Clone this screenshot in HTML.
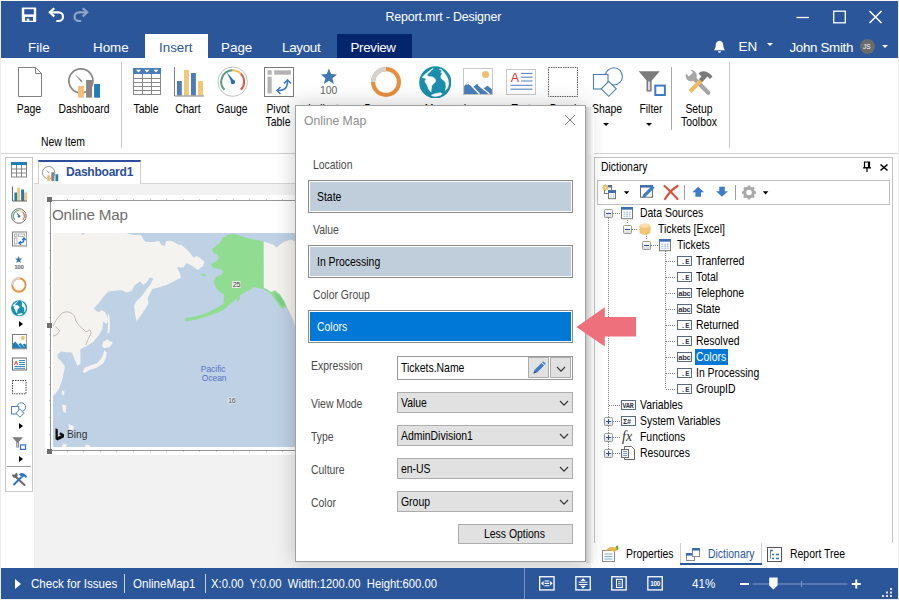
<!DOCTYPE html>
<html><head><meta charset="utf-8"><title>Report.mrt - Designer</title>
<style>
*{box-sizing:border-box;margin:0;padding:0}
html,body{width:899px;height:600px;overflow:hidden;background:#fff}
body{font-family:"Liberation Sans",sans-serif;font-size:12.4px;color:#000;position:relative}
svg{position:absolute;overflow:visible}
.t{position:absolute;white-space:nowrap;line-height:14px}
.ms{position:absolute;white-space:nowrap;font-size:12.4px;line-height:14px;transform:scaleX(.842);transform-origin:0 0}
.w{color:#fff}
.box{position:absolute}
#app{position:absolute;left:0;top:0;width:899px;height:600px;overflow:hidden;background:#fff}
#hdr{position:absolute;left:1px;top:0;width:897px;height:58px;background:#2b579a}
.tab{position:absolute;top:40px;font-size:13.4px;line-height:16px;color:#fff;white-space:nowrap}
#ribbon{position:absolute;left:1px;top:58px;width:897px;height:96px;background:#fff;border-bottom:1px solid #d2d2d2}
.rl{position:absolute;font-size:12.4px;line-height:13px;text-align:center;white-space:nowrap;transform:translateX(-50%) scaleX(.84);top:45px}
.vsep{position:absolute;width:1px;background:#c8c8c8}
.dd{position:absolute;width:0;height:0;border-left:3px solid transparent;border-right:3px solid transparent;border-top:3px solid #000}
#status{position:absolute;left:1px;top:568px;width:897px;height:31px;background:#2b579a}
.st{position:absolute;top:9px;font-size:12.6px;line-height:15px;color:#fff;white-space:nowrap;transform:scaleX(.92);transform-origin:0 0}
</style></head><body>
<svg width="0" height="0" style="position:absolute"><defs>
<symbol id="i-page" viewBox="0 0 32 32"><path d="M4.5 1.5H21.5L27.5 7.5V30.5H4.5Z" fill="#fff" stroke="#808080"/><path d="M21.5 1.5V7.5H27.5" fill="none" stroke="#808080"/></symbol>
<symbol id="i-dash" viewBox="0 0 32 32"><circle cx="12.9" cy="14.8" r="12" fill="#fff" stroke="#868686" stroke-width="1.7"/><path d="M6.3 7.6L13.6 14.2L14.8 16.6L12.6 15.4Z" fill="#868686"/><rect x="10.1" y="20" width="5.8" height="11.7" fill="#f5be78"/><rect x="18.1" y="14" width="6" height="17.7" fill="#8a8580"/><rect x="26.1" y="18" width="5.9" height="13.7" fill="#1f7eb8"/></symbol>
<symbol id="i-table" viewBox="0 0 32 32"><rect x="2.5" y="2.5" width="27" height="26" fill="#fff" stroke="#8a8a8a"/><rect x="2" y="2" width="28" height="6" fill="#4a7ebb"/><path d="M2.5 12.5H29.5M2.5 16.5H29.5M2.5 20.5H29.5M2.5 24.5H29.5M11.5 8V28M20.5 8V28" stroke="#8a8a8a" fill="none"/><path d="M5 3.8h5l-2.5 2.8zM13.5 3.8h5l-2.5 2.8zM22.5 3.8h5l-2.5 2.8z" fill="#fff"/></symbol>
<symbol id="i-chart" viewBox="0 0 32 32"><rect x="5" y="15" width="4.8" height="14.5" fill="#4a7ebb"/><rect x="12" y="4" width="4.9" height="25.5" fill="#f0c878"/><rect x="19" y="7" width="4.9" height="22.5" fill="#4a7ebb"/><rect x="26" y="15" width="5" height="14.5" fill="#f0c878"/><path d="M2.5 1V30H32" fill="none" stroke="#808080"/></symbol>
<symbol id="i-gauge" viewBox="0 0 32 32"><circle cx="15.7" cy="15.7" r="14.7" fill="#fff" stroke="#c4c4c4"/><path d="M7.6 23.8A11.5 11.5 0 0 1 15.7 4.2" fill="none" stroke="#5a9f80" stroke-width="2"/><path d="M15.7 4.2A11.5 11.5 0 0 1 23.8 7.6" fill="none" stroke="#f0c060" stroke-width="2"/><path d="M23.8 7.6A11.5 11.5 0 0 1 23.8 23.8" fill="none" stroke="#d85a40" stroke-width="2"/><path d="M9.8 6L17.3 15L14.6 16.8Z" fill="#2e6db4"/><circle cx="15.9" cy="16" r="2.2" fill="#2e6db4"/></symbol>
<symbol id="i-pivot" viewBox="0 0 32 32"><rect x="1.5" y="1.5" width="29" height="29" fill="#fff" stroke="#7a7a7a"/><rect x="4.5" y="4.3" width="4.2" height="4.4" fill="#b4b4b4"/><rect x="11.2" y="4.3" width="16.7" height="4.4" fill="#b4b4b4"/><rect x="4.5" y="10.7" width="4.2" height="16.7" fill="#b4b4b4"/><path d="M14.5 24.5C22 24.5 24.5 22 24.5 14.5" fill="none" stroke="#3d7cc9" stroke-width="1.6"/><path d="M17.5 21L14 24.5L17.5 28M21 17.5L24.5 14L28 17.5" fill="none" stroke="#3d7cc9" stroke-width="1.6"/></symbol>
<symbol id="i-ind" viewBox="0 0 32 32"><path d="M15.9 3.5L18.1 9.1L24 9.4L19.4 13.2L20.9 18.9L15.9 15.7L10.9 18.9L12.4 13.2L7.8 9.4L13.7 9.1Z" fill="#3f78b8"/><text x="15.6" y="28.6" font-size="10.400" text-anchor="middle" fill="#666" font-family="Liberation Sans,sans-serif">100</text></symbol>
<symbol id="i-prog" viewBox="0 0 32 32"><circle cx="16" cy="16" r="12.9" fill="none" stroke="#e8903f" stroke-width="4.2"/><path d="M3.1 16A12.9 12.9 0 0 1 16 3.1" fill="none" stroke="#d2d2d2" stroke-width="4.2"/></symbol>
<symbol id="i-map" viewBox="0 0 32 32"><circle cx="16.300" cy="16.400" r="16.100" fill="#1a8fad"/><path d="M13.700 2.400L9.300 5.700L5.300 9.100L3.300 11.400L6.700 12.400L7 13.400L6 14.700L6.300 16.400L8 18.400L9.300 22.400L11 25.100L12 26.100L12.300 23.100L12.700 19.700L14.300 17.700L16 16.400L16.700 14.400L15.700 12.400L13.700 11.100L10.300 10.400L8 10.100L8.300 8.400L10.300 6.400L12.700 4.100L14 2.700Z" fill="#fff" stroke="#fff" stroke-width="0.600" stroke-linejoin="round"/><path d="M20.300 3.700L22 3.400L22.700 5.100L21.700 6.400L23.300 7.100L22.300 9.100L21.700 10.700L22.700 13.100L25.300 14.700L26.700 17.100L27 21.100L26.300 24.400L28.700 21.700L29.700 17.700L29 13.100L26.700 8.400L24 5.100L21.700 3.100Z" fill="#fff" stroke="#fff" stroke-width="0.500" stroke-linejoin="round"/><path d="M12.300 29.100L16 27.700L21.300 26.700L23.300 27.700L21.300 29.400L16.700 30.400L13.300 30.100Z" fill="#fff" stroke="#fff" stroke-width="0.500" stroke-linejoin="round"/></symbol>
<symbol id="i-img" viewBox="0 0 32 32"><rect x="1.500" y="2.500" width="29" height="26" fill="#fff" stroke="#c8c8c8"/><circle cx="23.500" cy="8.600" r="3.500" fill="#f0c070"/><path d="M2.100 28V20.300L6 15.800L10.700 21.300L15.200 17.700L20.400 23.200L25.500 19.700L29.900 23.200V28Z" fill="#4a7ebb"/><path d="M6 15.800L4 18.200L5.200 19L6.200 17.800L7.400 19.200L8.300 18.500Z" fill="#fff"/><path d="M7 17L17.500 28M16 18.500L27.500 28" stroke="#fff" stroke-width="1.300" fill="none"/></symbol>
<symbol id="i-text" viewBox="0 0 32 32"><rect x="1.500" y="3.500" width="29" height="25" fill="#fff" stroke="#c8c8c8"/><text x="5.800" y="16" font-size="12.500" fill="#e03030" font-family="Liberation Sans,sans-serif">A</text><path d="M16 7.400H27.500M16 11.200H27.500M16 15H27.500M5.500 19.300H27.500M5.500 23.200H27.500" stroke="#4a7ebb" stroke-width="1" fill="none"/></symbol>
<symbol id="i-panel" viewBox="0 0 32 32"><rect x="1.500" y="1.500" width="29" height="29" fill="#fff" stroke="#505050" stroke-dasharray="1.400 1"/></symbol>
<symbol id="i-shape" viewBox="0 0 32 32"><circle cx="22.800" cy="10.400" r="8.600" fill="#fff" stroke="#4a7ebb" stroke-width="1.100"/><rect x="2.500" y="8.500" width="14.500" height="14.500" fill="#fff" stroke="#4a7ebb" stroke-width="1.100"/><path d="M17.700 15.300L25.200 22.800L17.700 30.300L10.200 22.800Z" fill="#fff" stroke="#4a7ebb" stroke-width="1.100"/></symbol>
<symbol id="i-filter" viewBox="0 0 32 32"><path d="M2.700 5.200H23.800L15.700 14.500V25.500H10.500V14.500Z" fill="#7c7c7c"/><path d="M12 15.500H14.200V24H12Z" fill="#d8d8d8"/><rect x="19.300" y="19.600" width="9.600" height="9.400" fill="#fff" stroke="#3d7cc9" stroke-width="2"/></symbol>
<symbol id="i-tools" viewBox="0 0 32 32"><path d="M9 10.500L25.300 26.800" stroke="#a6a6a6" stroke-width="4.400" stroke-linecap="round" fill="none"/><circle cx="8.200" cy="9.700" r="5.600" fill="#a6a6a6"/><path d="M0.500 5L4.500 1L10 6.500L6 10.500Z" fill="#fff"/><path d="M19.500 13L7 25.500" stroke="#f0b860" stroke-width="4.200" fill="none"/><path d="M21 11L17.500 14.500" stroke="#7a7a7a" stroke-width="4.200" fill="none"/><path d="M15.500 7.500C19 4 24 4.500 29.500 10.500L27 13L24.500 10.500L21.500 13.500L17.500 9.500Z" fill="#7a7a7a"/></symbol>
<symbol id="s-table" viewBox="0 0 16 16"><rect x="0.500" y="0.500" width="15" height="14.500" fill="#fff" stroke="#858585"/><rect x="0" y="0" width="16" height="3" fill="#1f7eb8"/><path d="M0.500 7H15.500M0.500 11H15.500M5.500 3V15M10.500 3V15" stroke="#858585" fill="none"/></symbol>
<symbol id="s-chart" viewBox="0 0 16 16"><rect x="3.400" y="6.500" width="2.800" height="8.500" fill="#1f7eb8"/><rect x="6.200" y="1.700" width="2.800" height="13.300" fill="#f5c878"/><rect x="10.100" y="3.500" width="2.900" height="11.500" fill="#1f7eb8"/><rect x="13" y="6.500" width="3" height="8.500" fill="#f5c878"/><path d="M1.500 0.500V15H16.300" fill="none" stroke="#666"/></symbol>
<symbol id="s-gauge" viewBox="0 0 16 16"><circle cx="7.900" cy="8" r="7.300" fill="#fff" stroke="#6e6e6e" stroke-width="1"/><path d="M4 11.900A5.500 5.500 0 0 1 7.900 2.500" fill="none" stroke="#5a9f80" stroke-width="1.100"/><path d="M7.900 2.500A5.500 5.500 0 0 1 11.800 4.100" fill="none" stroke="#f0c060" stroke-width="1.100"/><path d="M11.800 4.100A5.500 5.500 0 0 1 11.800 11.900" fill="none" stroke="#e0593c" stroke-width="1.100"/><path d="M5 3.500L8.700 7.700L7.400 8.600Z" fill="#2e6db4"/><circle cx="8" cy="8.200" r="1.200" fill="#2e6db4"/></symbol>
<symbol id="s-pivot" viewBox="0 0 16 16"><rect x="1.500" y="1" width="14.300" height="14" fill="#fff" stroke="#7a7a7a"/><rect x="3.500" y="3" width="2.500" height="2.500" fill="#fff" stroke="#999" stroke-width="0.700"/><rect x="7.500" y="3" width="6" height="2.500" fill="#fff" stroke="#999" stroke-width="0.700"/><rect x="3.500" y="7" width="2.500" height="6" fill="#fff" stroke="#999" stroke-width="0.700"/><path d="M8.500 12C12 12 13 11 13 7.500" fill="none" stroke="#1f6fc0" stroke-width="1.400"/><path d="M10 10.300L8 12L10 13.700M11.300 9L13 7L14.700 9" fill="none" stroke="#1f6fc0" stroke-width="1.300"/></symbol>
<symbol id="s-ind" viewBox="0 0 16 16"><path d="M7.600 0L8.600 2.500L11.200 2.600L9.200 4.300L9.900 6.900L7.600 5.400L5.300 6.900L6 4.300L4 2.600L6.600 2.500Z" fill="#3f78b8"/><text x="8" y="13" font-size="6.200" font-weight="bold" text-anchor="middle" fill="#666" font-family="Liberation Sans,sans-serif" letter-spacing="-0.200">100</text></symbol>
<symbol id="s-prog" viewBox="0 0 16 16"><circle cx="7.900" cy="8" r="6.700" fill="none" stroke="#e8903f" stroke-width="1.900"/><path d="M1.200 8A6.700 6.700 0 0 1 9 1.400" fill="none" stroke="#d6d6d6" stroke-width="1.900"/></symbol>
<symbol id="s-img" viewBox="0 0 16 16"><rect x="1.500" y="0.500" width="14.300" height="14.300" fill="#fff" stroke="#7a7a7a"/><circle cx="11.900" cy="4" r="2" fill="#f5c070"/><path d="M2 14.300V9.500L4.500 7.500L7.500 10.500L9.500 8.800L11.500 10.800L13.500 9.500L15.300 11V14.300Z" fill="#1f7eb8"/><path d="M4.500 7.500L10 13.500M9.500 8.800L13.500 13" stroke="#fff" stroke-width="0.700" fill="none"/></symbol>
<symbol id="s-text" viewBox="0 0 16 16"><rect x="1.500" y="2" width="14.300" height="12" fill="#fff" stroke="#6a6a6a"/><text x="3" y="8.500" font-size="6" font-weight="bold" fill="#e03030" font-family="Liberation Sans,sans-serif">A</text><path d="M8 4.500H14M8 6.500H14M8 8.500H14M3.500 10.500H14M3.500 12.300H14" stroke="#1f7eb8" stroke-width="0.900" fill="none"/></symbol>
<symbol id="s-panel" viewBox="0 0 16 16"><rect x="1.500" y="1.500" width="13.500" height="13.300" fill="#fff" stroke="#444" stroke-dasharray="1.500 1"/></symbol>
<symbol id="s-shape" viewBox="0 0 16 16"><circle cx="10.300" cy="5.100" r="4.300" fill="#fff" stroke="#4a7ebb" stroke-width="1"/><rect x="0.500" y="4.500" width="7.300" height="7.500" fill="#fff" stroke="#4a7ebb" stroke-width="1"/><path d="M9 7.200L13 11.200L9 15.200L5 11.200Z" fill="#fff" stroke="#4a7ebb" stroke-width="1"/></symbol>
<symbol id="s-filter" viewBox="0 0 16 16"><path d="M1.300 2.200H11.900L7.900 6.800V12.600H5.300V6.800Z" fill="#7c7c7c"/><path d="M6.100 7.500H7.100V11.800H6.100Z" fill="#d8d8d8"/><rect x="9.500" y="9.900" width="5" height="4.500" fill="#fff" stroke="#2e75c8" stroke-width="1.200"/></symbol>
<symbol id="s-tools" viewBox="0 0 16 16"><path d="M4.500 5.500L13.500 14" stroke="#6a6a6a" stroke-width="2" stroke-linecap="round" fill="none"/><path d="M1.200 3.200A3 3 0 0 0 5.500 6.500A3 3 0 0 0 5.200 1.500L3.700 3.800L2.300 3.500Z" fill="#6a6a6a"/><path d="M10.500 6L2.500 14" stroke="#2e75c8" stroke-width="2" fill="none"/><path d="M7.500 3.500C10 1 13 1.500 16.300 5.500L14.800 7L13 5.200L11.500 6.700L9 4.200Z" fill="#2e75c8"/></symbol>
</defs></svg>
<div id="app">
<!-- HEADER -->
<div id="hdr">
  <svg style="left:21px;top:7px" width="70" height="17" viewBox="0 0 70 17">
    <rect x="-0.200" y="0.500" width="14.400" height="14.400" rx="0.600" fill="#fff"/><rect x="2.250" y="2.200" width="9.550" height="5.200" fill="#2b579a"/><rect x="3.100" y="9.900" width="7.900" height="3.800" fill="#2b579a"/><rect x="4.750" y="11.600" width="2.500" height="2.100" fill="#fff"/>
    <path d="M28 5.300H36.650A4.350 4.350 0 0 1 36.650 14H34.300" fill="none" stroke="#fff" stroke-width="2.200"/><path d="M32.300 1.200L27.800 5.300L32.300 9.500" fill="none" stroke="#fff" stroke-width="2.200"/>
    <path d="M65 5.300H56.900A4.350 4.350 0 0 0 56.900 14H59.200" fill="none" stroke="#8fa5cc" stroke-width="2.200"/><path d="M60.700 1.200L65.200 5.300L60.700 9.500" fill="none" stroke="#8fa5cc" stroke-width="2.200"/>
  </svg>
  <div class="t w" style="left:384.500px;top:9px;font-size:12.400px;line-height:16px;letter-spacing:-0.160px">Report.mrt - Designer</div>
  <svg style="left:795px;top:10px" width="90" height="15" viewBox="0 0 90 15"><path d="M0.500 7.500H13" stroke="#fff" stroke-width="1.300"/><rect x="37.700" y="1.200" width="11.600" height="11.600" fill="none" stroke="#fff" stroke-width="1.300"/><path d="M73.500 1L85.500 13M85.500 1L73.500 13" stroke="#fff" stroke-width="1.500"/></svg>
  <div class="box" style="left:144px;top:34px;width:63px;height:24px;background:#fff"></div>
  <div class="box" style="left:336px;top:34px;width:75px;height:24px;background:#03256c"></div>
  <div class="tab" style="left:27px">File</div>
  <div class="tab" style="left:92px">Home</div>
  <div class="tab" style="left:158px;color:#2b579a">Insert</div>
  <div class="tab" style="left:220px">Page</div>
  <div class="tab" style="left:281px;letter-spacing:-0.300px">Layout</div>
  <div class="tab" style="left:349.500px;letter-spacing:-0.350px">Preview</div>
  <svg style="left:712px;top:40px" width="13" height="14" viewBox="0 0 13 14"><path d="M6.500 0.800C9 0.800 10.300 3 10.300 5.500C10.300 8 11.200 9 12 10.200H1C1.800 9 2.700 8 2.700 5.500C2.700 3 4 0.800 6.500 0.800Z" fill="#fff"/><path d="M5 11.300H8A1.500 1.500 0 0 1 5 11.300Z" fill="#fff"/></svg>
  <div class="tab" style="left:737.500px;top:38.500px">EN</div>
  <div class="dd" style="left:766px;top:43px;border-top-color:#fff"></div>
  <div class="tab" style="left:788.500px;letter-spacing:-0.350px">John Smith</div>
  <div class="box" style="left:859px;top:39px;width:15px;height:15px;border-radius:8px;background:#6b6b6b"></div>
  <div class="t w" style="left:862px;top:42px;font-size:6.500px;line-height:9px;letter-spacing:0">JS</div>
  <div class="dd" style="left:881px;top:45px;border-top-color:#fff"></div>
</div>
<!-- RIBBON -->
<div id="ribbon">
  <div class="vsep" style="left:120px;top:4px;height:86px"></div>
  <div class="vsep" style="left:728px;top:4px;height:86px"></div>
  <div class="vsep" style="left:670px;top:9px;height:63px;background:#a8a8a8"></div>
  <svg style="left:13px;top:8px" width="32" height="32"><use href="#i-page"/></svg>
  <svg style="left:67px;top:8px" width="32" height="32"><use href="#i-dash"/></svg>
  <svg style="left:130px;top:8px" width="32" height="32"><use href="#i-table"/></svg>
  <svg style="left:171px;top:8px" width="32" height="32"><use href="#i-chart"/></svg>
  <svg style="left:216px;top:8px" width="32" height="32"><use href="#i-gauge"/></svg>
  <svg style="left:262px;top:8px" width="32" height="32"><use href="#i-pivot"/></svg>
  <svg style="left:312px;top:7.300px" width="32" height="32"><use href="#i-ind"/></svg>
  <svg style="left:369px;top:8px" width="32" height="32"><use href="#i-prog"/></svg>
  <svg style="left:418px;top:7.600px" width="32" height="32"><use href="#i-map"/></svg>
  <svg style="left:461px;top:8px" width="32" height="32"><use href="#i-img"/></svg>
  <svg style="left:504px;top:8px" width="32" height="32"><use href="#i-text"/></svg>
  <svg style="left:546px;top:8px" width="32" height="32"><use href="#i-panel"/></svg>
  <svg style="left:590px;top:8px" width="32" height="32"><use href="#i-shape"/></svg>
  <svg style="left:635px;top:8px" width="32" height="32"><use href="#i-filter"/></svg>
  <svg style="left:682px;top:8px" width="32" height="32"><use href="#i-tools"/></svg>
  <div class="rl" style="left:28px">Page</div>
  <div class="rl" style="left:82.500px">Dashboard</div>
  <div class="rl" style="left:62px;top:78px">New Item</div>
  <div class="rl" style="left:145px">Table</div>
  <div class="rl" style="left:187px">Chart</div>
  <div class="rl" style="left:231px">Gauge</div>
  <div class="rl" style="left:277px">Pivot<br>Table</div>
  <div class="rl" style="left:327px">Indicator</div>
  <div class="rl" style="left:384px">Progress</div>
  <div class="rl" style="left:434px">Map</div>
  <div class="rl" style="left:477px">Image</div>
  <div class="rl" style="left:520px">Text</div>
  <div class="rl" style="left:562px">Panel</div>
  <div class="rl" style="left:606px">Shape</div>
  <div class="rl" style="left:650px">Filter</div>
  <div class="rl" style="left:698px">Setup<br>Toolbox</div>
  <div class="dd" style="left:601.500px;top:65px"></div>
  <div class="dd" style="left:645.300px;top:65px"></div>
</div>
<!-- WORKSPACE -->
<div class="box" style="left:5px;top:157px;width:28px;height:335px;background:#fff;border:1px solid #c8c8c8"></div>
<div id="tb">
  <svg style="left:11px;top:162px" width="16" height="16"><use href="#s-table"/></svg>
  <svg style="left:11px;top:185.500px" width="16" height="16"><use href="#s-chart"/></svg>
  <svg style="left:11px;top:207.500px" width="16" height="16"><use href="#s-gauge"/></svg>
  <svg style="left:11px;top:230.500px" width="16" height="16"><use href="#s-pivot"/></svg>
  <svg style="left:11px;top:256px" width="16" height="16"><use href="#s-ind"/></svg>
  <svg style="left:11px;top:277px" width="16" height="16"><use href="#s-prog"/></svg>
  <svg style="left:11px;top:300px" width="16" height="16"><use href="#i-map"/></svg>
  <svg style="left:11px;top:334px" width="16" height="16"><use href="#s-img"/></svg>
  <svg style="left:11px;top:355.500px" width="16" height="16"><use href="#s-text"/></svg>
  <svg style="left:11px;top:379px" width="16" height="16"><use href="#s-panel"/></svg>
  <svg style="left:11px;top:402px" width="16" height="16"><use href="#s-shape"/></svg>
  <svg style="left:11px;top:435px" width="16" height="16"><use href="#s-filter"/></svg>
  <svg style="left:11px;top:470.500px" width="16" height="16"><use href="#s-tools"/></svg>
  <div class="box" style="left:18.500px;top:320.500px;width:0;height:0;border-top:3px solid transparent;border-bottom:3px solid transparent;border-left:4px solid #000"></div>
  <div class="box" style="left:18.500px;top:422.500px;width:0;height:0;border-top:3px solid transparent;border-bottom:3px solid transparent;border-left:4px solid #000"></div>
  <div class="box" style="left:18.500px;top:455.500px;width:0;height:0;border-top:3px solid transparent;border-bottom:3px solid transparent;border-left:4px solid #000"></div>
  <div class="box" style="left:7px;top:466px;width:24px;height:1px;background:#a0a0a0"></div>
</div>
<!-- design surface -->
<div class="box" style="left:34px;top:183px;width:557px;height:385px;background:#f2f2f2;border-top:1px solid #d6d6d6;border-left:1px solid #ececec"></div>
<div class="box" style="left:38px;top:160px;width:103px;height:24px;background:#fff;border:1px solid #d0d0d0;border-top:2px solid #2b4f9a;border-bottom:none"></div>
<svg style="left:42px;top:164.500px" width="16.500" height="16.500" viewBox="0 0 32 32"><use href="#i-dash" width="32" height="32"/></svg>
<div class="t" style="left:65.500px;top:164px;font-size:13px;line-height:15px;font-weight:bold;color:#2b4f9a;letter-spacing:-0.300px;transform:scaleX(.93);transform-origin:0 0">Dashboard1</div>
<!-- page -->
<div class="box" style="left:45px;top:195px;width:540px;height:260px;background:#fff"></div>
<div class="box" style="left:50px;top:200px;width:535px;height:251px;border:1px solid #969696;border-right:none"></div>
<div class="t" style="left:52px;top:205px;font-size:15.200px;line-height:19px;color:#707070;letter-spacing:-0.200px">Online Map</div>
<svg style="left:53px;top:233px" width="244" height="214" viewBox="53 233 244 214">
  <rect x="53" y="233" width="244" height="214" fill="#bfd1e5"/>
  <g fill="#f5f3f0">
  <!-- main asia -->
  <path d="M53 233H81.500L83 235L85 233H126L133.500 235H141L143.500 239.500L146 242H153.500L159 241L161.500 245L165 246L166 241H171.500L181.500 246L188.500 251.500L193.500 257.500L197 256L201 259L204.500 262L203 266L198 270L196.500 268.500L193.500 264L188.500 261L185 263.500L183.500 266L177 267.500L180 273.500L181 277.500L173.500 281.500L166.500 285L158.500 287.500L152.500 289L150 293.500L147.500 298.500L148.500 303.500L145 309.500L141 315L136.500 321L135 313.500L134 306L136.500 301L141.500 296.500L146 290L150 285L153.500 278.500L150 277.500L146.500 282.500L143.500 285L140 281.500L135 285L131.500 291L126.500 292.500L121.500 290L108.500 291.500L103.500 296.500L98.500 303.500L93.500 308.500L98.500 312.500L101.500 310L105 312L107 316L108 320L106.500 324L103.100 321.500L102.500 328.700L98.800 335.200L93.400 341.700L86.900 346L80.300 349.300L80.500 355L80.500 364L77.500 365.800L75 360.500L73 355L71.500 352.500L66 352.200L61 351.500L57.500 354.500L57.800 358L61.500 361.500L65 366.600L63.400 374.200L61.900 380.700L58.700 389.400L54.300 394.800L53 396Z"/>
  <!-- sakhalin, japan -->
  <path d="M107.800 313L109.500 316L110 326L109.300 333.500L107.600 333L108 324Z"/>
  <path d="M103.100 341.700L107.400 339.500L112.900 342.800L109.600 347.100L104.200 348.200L102 346Z"/>
  <path d="M104.200 350.300L106.800 352.500L105.900 357.900L103.100 363.400L96.600 367.700L89 370.300L84.700 373.100L82.500 372L84.700 367.700L90.100 365.500L96.600 363.400L101 359L103.100 354.700Z"/>
  <path d="M62 390.500L64.700 391.500L63.400 396L61.800 394Z"/><path d="M62 404.500L66.300 405.600L65.600 413.200L63 411Z"/><path d="M68.400 424L73.800 426.200L72.800 432.700L69.500 430.600Z"/><path d="M63 443.500L67 444.500L66 447L62 447Z"/><path d="M85.800 444.600L90 445.500L90 447L85 447Z"/>
  <!-- chukotka right bit -->
  <path d="M180 244L185 248L190 253L193.500 259.500L198.500 257L202.500 260.500L201.500 264L196.500 269L191.500 265.500L186.500 263L183.500 267L180 268Z"/>
  <!-- canada -->
  <path d="M263.500 241.500L273 244.500L276.500 247.500L283.500 242L291 239.500L296 242V330L293.500 321L289 311L286.500 306L284 301L280 294.500L275 290.500L271 292L266.500 289L263.500 288Z"/>
  </g>
  <path d="M115.500 302.500l2.500 -1.500l2.500 1.500l-2.500 2Z" fill="#bfd1e5"/>
  <path d="M53 326C56 320 60 313 65 312C71 311 75 315 76 321C78 326 82 327 85.800 332L90 329.800L91.200 333L88 339.500L85.800 345M53 336L56.500 335L59.800 331L55.400 326.500" fill="none" stroke="#b3aea8" stroke-width="0.800"/>
  <!-- alaska -->
  <path d="M231.500 234L237 234.500L243.500 237L253.500 239.500L263.500 241.500L263.700 288L266.500 289L271 292L275 290.500L280 294.500L284 301L286.500 306.500L282.500 309L278.500 304.500L275 299.500L271.500 294.500L268.500 292L264 289.500L258.500 288L253.500 287L251 289.500L246.500 291.500L241.500 294.500L237.500 298L233.500 301.500L228.500 305.500L226.500 308L220 311.500L210 315.500L196.500 319.500L186 321.500L184.500 318L195 316.500L206.500 313L216.500 308L223.500 304L224 294.500L220 292L216 288L213.500 281.500L216 277L221.500 274.500L223.500 271.500L220 269L213.500 268L210.500 264L216 261.500L219 258L217.500 254.500L213.500 253L212 249L216 246L220 243L222.500 238L227.500 235Z" fill="#90dd92"/>
  <path d="M201 273.500L206.500 274.500L205.500 276.500L201.500 275.500Z" fill="#90dd92"/><path d="M237.500 298L240.500 296L239 301L236.500 301.500Z" fill="#90dd92"/>
  <path d="M274 292L280 296L285 304L283 307L277 300Z" fill="#7fcf86"/>
  <rect x="232" y="281" width="8.500" height="7" fill="#e9e9e6"/>
  <text x="232.800" y="287" font-size="7" fill="#444" font-family="Liberation Sans,sans-serif" letter-spacing="-0.300">25</text>
  <text x="213.200" y="371.700" font-size="8.400" fill="#5474c4" text-anchor="middle" font-family="Liberation Sans,sans-serif">Pacific</text>
  <text x="214.200" y="380.700" font-size="8.400" fill="#5474c4" text-anchor="middle" font-family="Liberation Sans,sans-serif">Ocean</text>
  <rect x="227.700" y="397.300" width="7.800" height="6.400" fill="#dde3ea"/>
  <text x="228.300" y="403" font-size="6.800" fill="#555" font-family="Liberation Sans,sans-serif" letter-spacing="-0.300">16</text>
  <path d="M55.500 428.300L57.800 429.200V437L61 435.200L59.300 434.300L60.300 432.300L64 434.200V437.200L57.800 440.500L55.500 439.200Z" fill="#111"/>
  <text x="67" y="438.200" font-size="10.200" fill="#333" font-family="Liberation Sans,sans-serif">Bing</text>
</svg>
<div id="ticks" class="box" style="left:50px;top:199px;width:535px;height:1px;background:repeating-linear-gradient(90deg,#c4c4c4 0 1px,transparent 1px 16.600px)"></div>
<div class="box" style="left:50px;top:451px;width:535px;height:1px;background:repeating-linear-gradient(90deg,#c4c4c4 0 1px,transparent 1px 16.600px)"></div>
<div class="box" style="left:49px;top:200px;width:1px;height:251px;background:repeating-linear-gradient(180deg,#c4c4c4 0 1px,transparent 1px 16.700px)"></div>
<!-- handles -->
<div class="box" style="left:47px;top:197px;width:5px;height:5px;background:#6e6e6e"></div>
<div class="box" style="left:47px;top:322.500px;width:5px;height:5px;background:#6e6e6e"></div>
<div class="box" style="left:47px;top:449px;width:5px;height:5px;background:#6e6e6e"></div>
<!-- DICTIONARY -->
<div class="box" style="left:594px;top:157px;width:299px;height:386px;background:#fff;border:1px solid #c4c4c4;border-bottom:none"></div>
<div class="box" style="left:594px;top:543px;width:299px;height:25px;background:#fff"></div>
<div class="ms" style="left:601px;top:160px">Dictionary</div>
<svg style="left:862px;top:161px" width="28" height="12" viewBox="0 0 28 12"><path d="M2.500 1H7.500V6.500H2.500ZM6.500 1V6.500M1 6.800H9M5 7V11" fill="none" stroke="#000" stroke-width="1.200"/><path d="M18.500 3.500L25.500 9.500M25.500 3.500L18.500 9.500" stroke="#000" stroke-width="1.600"/></svg>
<div class="box" style="left:597px;top:180px;width:293px;height:25px;background:#fff;border:1px solid #c0c0c0"></div>
<svg style="left:600px;top:183px" width="172" height="19" viewBox="600 183 172 19">
<rect x="604.500" y="185.500" width="7" height="8" fill="#fff" stroke="#7a7a7a"/><rect x="604" y="185" width="8" height="2.500" fill="#3b6fb5"/>
<rect x="608.500" y="190.700" width="7" height="8" fill="#fff" stroke="#7a7a7a"/><rect x="608" y="190.200" width="8" height="2.800" fill="#3b6fb5"/><path d="M610.500 195h1M613 195h1M610.500 197h1M613 197h1" stroke="#7aa7d8"/>
<g stroke="#f0c470" stroke-width="1.100"><path d="M605.500 184V191.200M602 187.600H609M603 185.100L608 190.100M608 185.100L603 190.100"/></g><circle cx="605.500" cy="187.600" r="2.300" fill="none" stroke="#f0c470" stroke-width="1"/><circle cx="605.500" cy="187.600" r="0.800" fill="#fff"/>
<path d="M623.900 191.200h5.400l-2.700 3.100Z" fill="#000"/>
<rect x="640.500" y="185.700" width="12" height="11.500" fill="#fff" stroke="#6a6a6a"/><rect x="640" y="185.200" width="13" height="2.400" fill="#3b6fb5"/><path d="M642 198L643.200 194.500L652.300 185.600L654.600 187.800L645.500 196.800Z" fill="#3d7cc9"/>
<path d="M664.500 186C668 189 673 194 677.500 199M677.500 186C672 189.500 668 194 665 199" fill="none" stroke="#d9533c" stroke-width="2.200" stroke-linecap="round"/>
<path d="M684.500 185V200M735.500 185V200" stroke="#a0a0a0"/>
<path d="M698.200 186.700L704.100 192.300H701V196.700H695.400V192.300H692.300Z" fill="#3b7ccb"/>
<path d="M722 196.800L727.900 191.200H724.800V186.700H719.200V191.200H716.100Z" fill="#3b7ccb"/>
<g transform="translate(749 192.500)"><circle r="4.600" fill="none" stroke="#a8a8a8" stroke-width="2.600"/><path d="M0 -7V7M-7 0H7M-5 -5L5 5M5 -5L-5 5" stroke="#a8a8a8" stroke-width="2.400"/><circle r="2.800" fill="#fff"/></g>
<path d="M762.800 191.300h5.600l-2.800 3.200Z" fill="#000"/>
</svg>
<svg style="left:594px;top:205px" width="299" height="260" viewBox="594 205 299 260"><defs><linearGradient id="exg" x1="0" y1="0" x2="0" y2="1"><stop offset="0" stop-color="#fff"/><stop offset="1" stop-color="#dcdcdc"/></linearGradient></defs>
<path d="M608.500 218V453" stroke="#808080" stroke-width="1" stroke-dasharray="1 1" fill="none"/>
<path d="M627.500 218V224M646.500 234V240M665.500 251V389" stroke="#808080" stroke-width="1" stroke-dasharray="1 1" fill="none"/>
<path d="M613 213.5H620" stroke="#808080" stroke-width="1" stroke-dasharray="1 1" fill="none"/>
<rect x="604.5" y="209.5" width="8" height="8" rx="1" fill="url(#exg)" stroke="#999"/>
<path d="M606 213.5H611" stroke="#2b4f9a"/>
<g transform="translate(621 207)"><rect x="0.500" y="0.500" width="11" height="11.200" fill="#fff" stroke="#7a7a7a"/><rect x="0" y="0" width="12" height="2.700" fill="#3b6fb5"/><path d="M2.500 5.200h1.800M5.200 5.200h1.800M7.900 5.200h1.800M2.500 7.200h1.800M5.200 7.200h1.800M7.900 7.200h1.800M2.500 9.200h1.800M5.200 9.200h1.800M7.900 9.200h1.800" stroke="#7aa7d8" stroke-width="0.900"/></g>
<path d="M632 229.5H638" stroke="#808080" stroke-width="1" stroke-dasharray="1 1" fill="none"/>
<rect x="623.5" y="225.5" width="8" height="8" rx="1" fill="url(#exg)" stroke="#999"/>
<path d="M625 229.5H630" stroke="#2b4f9a"/>
<g transform="translate(639 223)"><path d="M0.500 2.500V9.500A5.500 2.200 0 0 0 11.500 9.500V2.500Z" fill="#f0c872"/><ellipse cx="6" cy="2.500" rx="5.500" ry="2.200" fill="#f8e0a8"/></g>
<path d="M651 245.5H658" stroke="#808080" stroke-width="1" stroke-dasharray="1 1" fill="none"/>
<rect x="642.5" y="241.5" width="8" height="8" rx="1" fill="url(#exg)" stroke="#999"/>
<path d="M644 245.5H649" stroke="#2b4f9a"/>
<g transform="translate(659 239)"><rect x="0.500" y="0.500" width="11" height="11.200" fill="#fff" stroke="#7a7a7a"/><rect x="0" y="0" width="12" height="2.700" fill="#3b6fb5"/><path d="M2.500 5.200h1.800M5.200 5.200h1.800M7.900 5.200h1.800M2.500 7.200h1.800M5.200 7.200h1.800M7.900 7.200h1.800M2.500 9.200h1.800M5.200 9.200h1.800M7.900 9.200h1.800" stroke="#7aa7d8" stroke-width="0.900"/></g>
<path d="M666 261.5H676" stroke="#808080" stroke-width="1" stroke-dasharray="1 1" fill="none"/>
<rect x="677.5" y="256.5" width="14" height="9" fill="#fff" stroke="#5a6a80"/><text x="681" y="264" font-size="7" font-weight="bold" fill="#334" font-family="Liberation Mono,monospace">.E</text>
<path d="M666 277.5H676" stroke="#808080" stroke-width="1" stroke-dasharray="1 1" fill="none"/>
<rect x="677.5" y="272.5" width="14" height="9" fill="#fff" stroke="#5a6a80"/><text x="681" y="280" font-size="7" font-weight="bold" fill="#334" font-family="Liberation Mono,monospace">.E</text>
<path d="M666 293.5H676" stroke="#808080" stroke-width="1" stroke-dasharray="1 1" fill="none"/>
<rect x="677.5" y="288.5" width="14" height="9" fill="#fff" stroke="#5a6a80"/><text x="678.3" y="296" font-size="7.500" font-weight="bold" fill="#334" font-family="Liberation Sans,sans-serif" letter-spacing="-0.300">abc</text>
<path d="M666 309.5H676" stroke="#808080" stroke-width="1" stroke-dasharray="1 1" fill="none"/>
<rect x="677.5" y="304.5" width="14" height="9" fill="#fff" stroke="#5a6a80"/><text x="678.3" y="312" font-size="7.500" font-weight="bold" fill="#334" font-family="Liberation Sans,sans-serif" letter-spacing="-0.300">abc</text>
<path d="M666 325.5H676" stroke="#808080" stroke-width="1" stroke-dasharray="1 1" fill="none"/>
<rect x="677.5" y="320.5" width="14" height="9" fill="#fff" stroke="#5a6a80"/><text x="681" y="328" font-size="7" font-weight="bold" fill="#334" font-family="Liberation Mono,monospace">.E</text>
<path d="M666 341.5H676" stroke="#808080" stroke-width="1" stroke-dasharray="1 1" fill="none"/>
<rect x="677.5" y="336.5" width="14" height="9" fill="#fff" stroke="#5a6a80"/><text x="681" y="344" font-size="7" font-weight="bold" fill="#334" font-family="Liberation Mono,monospace">.E</text>
<path d="M666 357.5H676" stroke="#808080" stroke-width="1" stroke-dasharray="1 1" fill="none"/>
<rect x="677.5" y="352.5" width="14" height="9" fill="#fff" stroke="#5a6a80"/><text x="678.3" y="360" font-size="7.500" font-weight="bold" fill="#334" font-family="Liberation Sans,sans-serif" letter-spacing="-0.300">abc</text>
<path d="M666 373.5H676" stroke="#808080" stroke-width="1" stroke-dasharray="1 1" fill="none"/>
<rect x="677.5" y="368.5" width="14" height="9" fill="#fff" stroke="#5a6a80"/><text x="681" y="376" font-size="7" font-weight="bold" fill="#334" font-family="Liberation Mono,monospace">.E</text>
<path d="M666 389.5H676" stroke="#808080" stroke-width="1" stroke-dasharray="1 1" fill="none"/>
<rect x="677.5" y="384.5" width="14" height="9" fill="#fff" stroke="#5a6a80"/><text x="681" y="392" font-size="7" font-weight="bold" fill="#334" font-family="Liberation Mono,monospace">.E</text>
<path d="M609 405.5H620" stroke="#808080" stroke-width="1" stroke-dasharray="1 1" fill="none"/>
<rect x="621.5" y="400.5" width="14" height="9" fill="#fff" stroke="#5a6a80"/><text x="622.5" y="408" font-size="6.500" font-weight="bold" fill="#334" font-family="Liberation Mono,monospace" letter-spacing="-0.300">VAR</text>
<path d="M613 421.5H620" stroke="#808080" stroke-width="1" stroke-dasharray="1 1" fill="none"/>
<rect x="604.5" y="417.5" width="8" height="8" rx="1" fill="url(#exg)" stroke="#999"/>
<path d="M606 421.5H611" stroke="#2b4f9a"/>
<path d="M608.5 419V424" stroke="#2b4f9a"/>
<rect x="621.5" y="416.5" width="14" height="9" fill="#fff" stroke="#5a6a80"/><text x="623" y="424" font-size="7" font-weight="bold" fill="#334" font-family="Liberation Mono,monospace" letter-spacing="-0.300">Σ#</text>
<path d="M613 437.5H620" stroke="#808080" stroke-width="1" stroke-dasharray="1 1" fill="none"/>
<rect x="604.5" y="433.5" width="8" height="8" rx="1" fill="url(#exg)" stroke="#999"/>
<path d="M606 437.5H611" stroke="#2b4f9a"/>
<path d="M608.5 435V440" stroke="#2b4f9a"/>
<text x="622" y="441" font-size="14" font-style="italic" fill="#333" font-family="Liberation Serif,serif">fx</text>
<path d="M613 453.5H620" stroke="#808080" stroke-width="1" stroke-dasharray="1 1" fill="none"/>
<rect x="604.5" y="449.5" width="8" height="8" rx="1" fill="url(#exg)" stroke="#999"/>
<path d="M606 453.5H611" stroke="#2b4f9a"/>
<path d="M608.5 451V456" stroke="#2b4f9a"/>
<path d="M624.5 446.5H631.5L634.5 449.5V459.5H624.5Z" fill="#fff" stroke="#666"/><rect x="621.5" y="449.5" width="7" height="8" fill="#fff" stroke="#666"/><path d="M623 451.5h4M623 453.5h4M623 455.5h4" stroke="#4a7ebb" stroke-width="0.800"/>
</svg>
<div class="ms" style="left:639.5px;top:206px">Data Sources</div>
<div class="ms" style="left:658px;top:222px">Tickets [Excel]</div>
<div class="ms" style="left:677px;top:238px">Tickets</div>
<div class="ms" style="left:696.3px;top:254px">Tranferred</div>
<div class="ms" style="left:696.3px;top:270px">Total</div>
<div class="ms" style="left:696.3px;top:286px">Telephone</div>
<div class="ms" style="left:696.3px;top:302px">State</div>
<div class="ms" style="left:696.3px;top:318px">Returned</div>
<div class="ms" style="left:696.3px;top:334px">Resolved</div>
<div class="box" style="left:695px;top:349px;width:33px;height:16px;background:#0078d7"></div>
<div class="ms w" style="left:696.3px;top:350px">Colors</div>
<div class="ms" style="left:696.3px;top:366px">In Processing</div>
<div class="ms" style="left:696.3px;top:382px">GroupID</div>
<div class="ms" style="left:639.5px;top:398px">Variables</div>
<div class="ms" style="left:639.5px;top:414px">System Variables</div>
<div class="ms" style="left:639.5px;top:430px">Functions</div>
<div class="ms" style="left:639.5px;top:446px">Resources</div>
<svg style="left:601px;top:545px" width="190" height="19" viewBox="601 545 190 19">
<rect x="602.500" y="550.500" width="12" height="11" fill="#fff" stroke="#8a8a8a"/><path d="M604.500 554h8M604.500 556.500h8M604.500 559h8" stroke="#7aa7d8" stroke-width="1"/><path d="M606 551C607 547.500 611 546 614.500 547.500L616.500 546.500L618 550L614 552C611 550 608 550 606 551Z" fill="#e8b850"/><path d="M616 546l2 -0.500l0.500 4l-1.500 0.500Z" fill="#4aa84a"/>
<rect x="686.500" y="553.500" width="8" height="7" fill="#fff" stroke="#8a8a8a"/><rect x="686" y="553" width="9" height="2.600" fill="#3b6fb5"/><rect x="692.500" y="548.500" width="7" height="8" fill="#fff" stroke="#8a8a8a"/><rect x="692" y="548" width="8" height="2.600" fill="#3b6fb5"/>
<rect x="767.500" y="547.500" width="14" height="14" fill="#fff" stroke="#555"/><path d="M770 550.500h3M772 554.500h2M772 558.500h2M776 554.500h3M776 558.500h3" stroke="#2e75c8" stroke-width="1.400"/><path d="M770.500 551v7.500" stroke="#2e75c8" stroke-width="0.800"/>
</svg>
<div class="box" style="left:680px;top:543px;width:1px;height:21px;background:#d0d0d0"></div>
<div class="box" style="left:761px;top:543px;width:1px;height:21px;background:#d0d0d0"></div>
<div class="box" style="left:680px;top:563px;width:82px;height:2px;background:#2b579a"></div>
<div class="ms" style="left:625.500px;top:547px">Properties</div>
<div class="ms" style="left:707.500px;top:547px;color:#2b579a">Dictionary</div>
<div class="ms" style="left:789.500px;top:547px">Report Tree</div>
<!-- DIALOG -->
<div class="box" style="left:295px;top:104.800px;width:291px;height:457.200px;background:#fff;border:1px solid #a0a0a0;box-shadow:0 0 20px 1px rgba(0,0,0,.20)"></div>
<div id="rsh" class="box" style="left:586px;top:107px;width:8px;height:47px;background:linear-gradient(90deg,#c6c6c6,#e4e4e4 50%,#fcfcfc)"></div>
<div class="box" style="left:586px;top:154px;width:8px;height:409px;background:linear-gradient(90deg,#c6c6c6,#dedede 45%,#f8f8f8)"></div>
<div class="t" style="left:304px;top:114px;font-size:12.200px;line-height:15px;color:#8e8e8e">Online Map</div>
<svg style="left:564px;top:114px" width="12" height="12" viewBox="0 0 12 12"><path d="M1 1L11 11M11 1L1 11" stroke="#7a7a7a" stroke-width="1"/></svg>
<div class="ms" style="left:313px;top:158px;color:#4a4a4a">Location</div>
<div class="box" style="left:308px;top:180px;width:264.800px;height:33px;border:1px solid #8a8a8a;background:#fff;padding:1px"><div style="width:100%;height:100%;background:#c0cedc"></div></div>
<div class="ms" style="left:317px;top:190px">State</div>
<div class="ms" style="left:313px;top:223px;color:#4a4a4a">Value</div>
<div class="box" style="left:308px;top:245px;width:264.800px;height:33px;border:1px solid #8a8a8a;background:#fff;padding:1px"><div style="width:100%;height:100%;background:#c0cedc"></div></div>
<div class="ms" style="left:317px;top:255px">In Processing</div>
<div class="ms" style="left:313px;top:288px;color:#4a4a4a">Color Group</div>
<div class="box" style="left:308px;top:310px;width:264.800px;height:33px;border:1px solid #8a8a8a;background:#fff;padding:1px"><div style="width:100%;height:100%;background:#0078d7"></div></div>
<div class="ms w" style="left:317px;top:320px">Colors</div>

<div class="ms" style="left:311px;top:359px;color:#4a4a4a">Expression</div>
<div class="box" style="left:397px;top:355.500px;width:175.800px;height:24px;border:1px solid #999;background:#fff"></div>
<div class="ms" style="left:401px;top:361px">Tickets.Name</div>
<div class="box" style="left:528px;top:357px;width:21px;height:21px;border:1px solid #adadad;background:#e1e1e1"></div>
<svg style="left:530.500px;top:359.500px" width="16" height="16" viewBox="0 0 16 16"><path d="M2.500 13.500L3.500 10L10.500 3L13 5.500L6 12.500Z" fill="#3d7cc9"/><path d="M11.200 2.300L12.200 1.300L14.700 3.800L13.700 4.800Z" fill="#3d7cc9"/><path d="M2.500 13.500L3.300 10.800L5.200 12.700Z" fill="#555"/></svg>
<div class="box" style="left:550px;top:357px;width:21px;height:21px;border:1px solid #adadad;background:#e1e1e1"></div>
<svg style="left:556px;top:365.700px" width="10" height="7" viewBox="0 0 10 7"><path d="M1 1L5 5.200L9 1" fill="none" stroke="#333" stroke-width="1.100"/></svg>

<div class="ms" style="left:311px;top:397px;color:#4a4a4a">View Mode</div>
<div class="box" style="left:397px;top:392px;width:175.800px;height:21px;border:1px solid #adadad;background:#e1e1e1"></div>
<div class="ms" style="left:401px;top:396px">Value</div>
<svg style="left:559px;top:399.5px" width="10" height="7" viewBox="0 0 10 7"><path d="M1 1L5 5.200L9 1" fill="none" stroke="#333" stroke-width="1.100"/></svg>

<div class="ms" style="left:311px;top:430px;color:#4a4a4a">Type</div>
<div class="box" style="left:397px;top:425px;width:175.800px;height:21px;border:1px solid #adadad;background:#e1e1e1"></div>
<div class="ms" style="left:401px;top:429px">AdminDivision1</div>
<svg style="left:559px;top:432.5px" width="10" height="7" viewBox="0 0 10 7"><path d="M1 1L5 5.200L9 1" fill="none" stroke="#333" stroke-width="1.100"/></svg>

<div class="ms" style="left:311px;top:463px;color:#4a4a4a">Culture</div>
<div class="box" style="left:397px;top:458px;width:175.800px;height:21px;border:1px solid #adadad;background:#e1e1e1"></div>
<div class="ms" style="left:401px;top:462px">en-US</div>
<svg style="left:559px;top:465.5px" width="10" height="7" viewBox="0 0 10 7"><path d="M1 1L5 5.200L9 1" fill="none" stroke="#333" stroke-width="1.100"/></svg>

<div class="ms" style="left:311px;top:496px;color:#4a4a4a">Color</div>
<div class="box" style="left:397px;top:491px;width:175.800px;height:21px;border:1px solid #adadad;background:#e1e1e1"></div>
<div class="ms" style="left:401px;top:495px">Group</div>
<svg style="left:559px;top:498.5px" width="10" height="7" viewBox="0 0 10 7"><path d="M1 1L5 5.200L9 1" fill="none" stroke="#333" stroke-width="1.100"/></svg>

<div class="box" style="left:457.500px;top:524px;width:115.300px;height:20px;border:1px solid #adadad;background:#e1e1e1"></div>
<div class="ms" style="left:484px;top:527px">Less Options</div>
<!-- ARROW -->
<svg style="left:576px;top:307px" width="61" height="40" viewBox="576 307 61 40"><path d="M576.400 327L604.800 307.300V317H636V336.600H604.800V346.600Z" fill="#ee707c"/></svg>
<!-- STATUS -->
<div id="status">
  <div class="box" style="left:14px;top:11px;width:0;height:0;border-top:5px solid transparent;border-bottom:5px solid transparent;border-left:6px solid #fff"></div>
  <div class="st" style="left:30px">Check for Issues</div>
  <div class="box" style="left:123px;top:6px;width:1px;height:19px;background:#c9d3e6"></div>
  <div class="st" style="left:131.500px">OnlineMap1</div>
  <div class="box" style="left:204px;top:6px;width:1px;height:19px;background:#c9d3e6"></div>
  <div class="st" style="left:209.500px;font-size:12.600px;transform:scaleX(.895)">X:0.00&nbsp; Y:0.00&nbsp; Width:1200.00&nbsp; Height:600.00</div>
  <div class="box" style="left:523px;top:0;width:1px;height:31px;background:#7890bf"></div>
  <svg style="left:538px;top:8px" width="130" height="16" viewBox="0 0 130 16">
    <g fill="none" stroke="#fff" stroke-width="1.300"><rect x="0.650" y="0.750" width="14.400" height="13.200"/><path d="M5.500 5H10.300M5.500 7.350H10.300M5.500 9.700H10.300" stroke-width="1.100"/>
    <rect x="36.850" y="0.750" width="14.400" height="13.200"/><path d="M39.700 6.250H48.500M39.700 8.550H48.500" stroke-width="1.100"/>
    <rect x="72.750" y="0.750" width="14.400" height="13.200"/><rect x="77.500" y="3.300" width="5.800" height="8.200" stroke-width="1.100"/><path d="M79 5.700H81.800M79 7.400H81.800M79 9.100H81.800" stroke-width="0.700"/>
    <rect x="108.850" y="0.750" width="14.400" height="13.200"/></g>
    <path d="M2 7.350L4.600 4.900V9.800ZM13.700 7.350L11.100 4.900V9.800ZM44.100 2.300L46.800 5H41.400ZM44.100 12.400L46.800 9.800H41.400Z" fill="#fff"/>
    <text x="116.100" y="9.700" font-size="6.300" font-weight="bold" text-anchor="middle" fill="#fff" font-family="Liberation Sans,sans-serif" letter-spacing="-0.200">100</text>
  </svg>
  <div class="st" style="left:691px;font-size:12.600px">41%</div>
  <svg style="left:738px;top:8px" width="152" height="22" viewBox="0 0 152 22">
    <path d="M1 8H10" stroke="#fff" stroke-width="2"/><path d="M13.500 8H108.500" stroke="#7f99c8" stroke-width="1"/><path d="M62.500 5V11" stroke="#7f99c8" stroke-width="1"/>
    <path d="M30.200 1.500H38.600V9.500L34.400 13.500L30.200 9.500Z" fill="#fff"/>
    <path d="M112.800 8H121.800M117.300 3.500V12.500" stroke="#fff" stroke-width="2"/>
    <g fill="#e6e2da"><rect x="151" y="12" width="2" height="2"/><rect x="151" y="15.500" width="2" height="2"/><rect x="151" y="19" width="2" height="2"/><rect x="147" y="15.500" width="2" height="2"/><rect x="147" y="19" width="2" height="2"/><rect x="143" y="19" width="2" height="2"/></g>
  </svg>
</div>
<!-- window frame -->
<div id="frame" class="box" style="left:0;top:0;width:899px;height:600px;border:1px solid #ececec;border-top-color:#f8f5ee;border-bottom-width:1.300px;pointer-events:none"></div>
</div></body></html>
